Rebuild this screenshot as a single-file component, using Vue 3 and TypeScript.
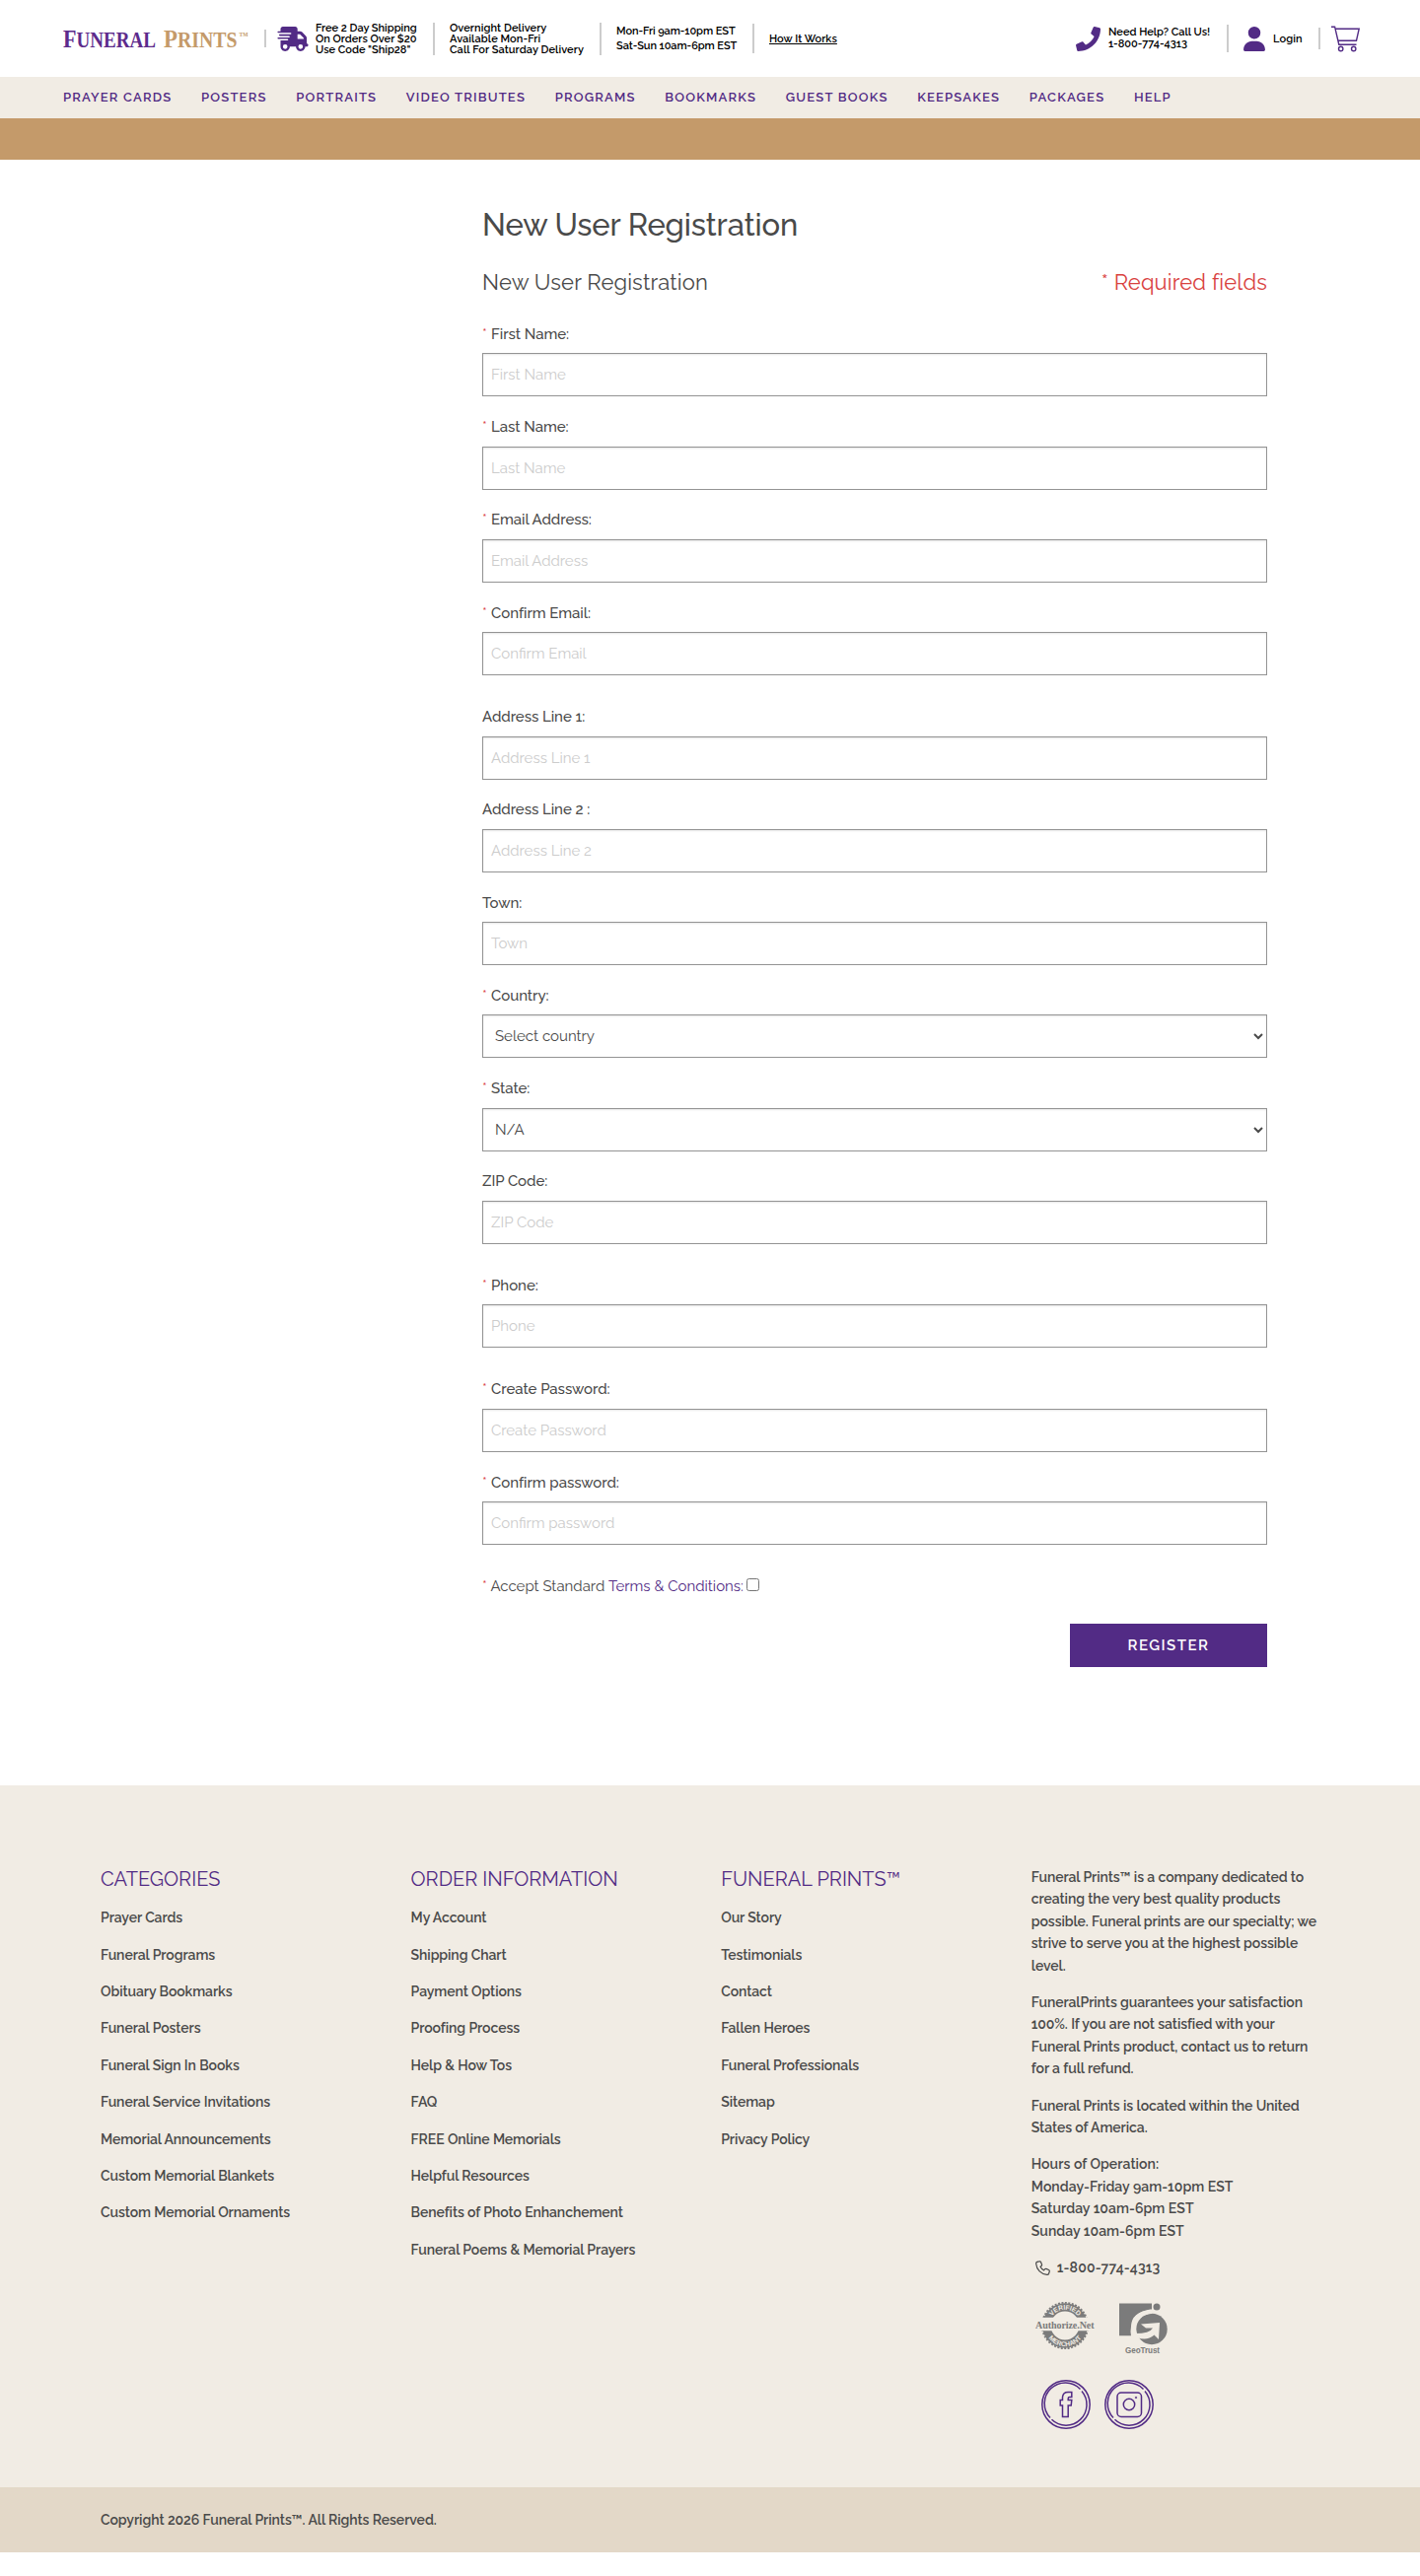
<script setup lang="ts">
interface Field {
  label: string
  required?: boolean
  kind?: 'select'
  text: string
  spaced?: boolean
}

const nav: string[] = [
  'Prayer Cards', 'Posters', 'Portraits', 'Video Tributes', 'Programs',
  'Bookmarks', 'Guest Books', 'Keepsakes', 'Packages', 'Help',
]

const fields: Field[] = [
  { label: 'First Name:', required: true, text: 'First Name' },
  { label: 'Last Name:', required: true, text: 'Last Name' },
  { label: 'Email Address:', required: true, text: 'Email Address' },
  { label: 'Confirm Email:', required: true, text: 'Confirm Email', spaced: true },
  { label: 'Address Line 1:', text: 'Address Line 1' },
  { label: 'Address Line 2 :', text: 'Address Line 2' },
  { label: 'Town:', text: 'Town' },
  { label: 'Country:', required: true, kind: 'select', text: 'Select country' },
  { label: 'State:', required: true, kind: 'select', text: 'N/A' },
  { label: 'ZIP Code:', text: 'ZIP Code', spaced: true },
  { label: 'Phone:', required: true, text: 'Phone', spaced: true },
  { label: 'Create Password:', required: true, text: 'Create Password' },
  { label: 'Confirm password:', required: true, text: 'Confirm password', spaced: true },
]

const columns: { title: string; links: string[] }[] = [
  {
    title: 'CATEGORIES',
    links: ['Prayer Cards', 'Funeral Programs', 'Obituary Bookmarks', 'Funeral Posters', 'Funeral Sign In Books',
      'Funeral Service Invitations', 'Memorial Announcements', 'Custom Memorial Blankets', 'Custom Memorial Ornaments'],
  },
  {
    title: 'ORDER INFORMATION',
    links: ['My Account', 'Shipping Chart', 'Payment Options', 'Proofing Process', 'Help & How Tos', 'FAQ',
      'FREE Online Memorials', 'Helpful Resources', 'Benefits of Photo Enhanchement', 'Funeral Poems & Memorial Prayers'],
  },
  {
    title: 'FUNERAL PRINTS™',
    links: ['Our Story', 'Testimonials', 'Contact', 'Fallen Heroes', 'Funeral Professionals', 'Sitemap', 'Privacy Policy'],
  },
]
</script>

<template>
  <div class="page">
    <header class="top">
      <svg class="logo" width="190" height="26" viewBox="0 0 190 26">
        <g font-family="'Liberation Serif', serif" font-weight="700">
          <text x="0" y="21.500" font-size="22.500" fill="#5d2b8c" textLength="94" lengthAdjust="spacingAndGlyphs"><tspan font-size="26">F</tspan>UNERAL</text>
          <text x="102" y="21.500" font-size="22.500" fill="#c49a6a" textLength="74.500" lengthAdjust="spacingAndGlyphs"><tspan font-size="26">P</tspan>RINTS</text>
          <text x="178.500" y="11" font-size="6.500" fill="#c49a6a" textLength="9" lengthAdjust="spacingAndGlyphs">TM</text>
        </g>
      </svg>
      <i class="sep s1"></i>
      <svg class="truck" viewBox="0 0 640 512" fill="#522b85"><path d="M112 0C85.5 0 64 21.5 64 48V96H16c-8.8 0-16 7.2-16 16s7.2 16 16 16H272c8.8 0 16 7.2 16 16s-7.2 16-16 16H48c-8.8 0-16 7.2-16 16s7.2 16 16 16H240c8.8 0 16 7.2 16 16s-7.2 16-16 16H16c-8.8 0-16 7.2-16 16s7.2 16 16 16H208c8.8 0 16 7.2 16 16s-7.2 16-16 16H64V416c0 53 43 96 96 96s96-43 96-96H384c0 53 43 96 96 96s96-43 96-96h32c17.7 0 32-14.3 32-32s-14.3-32-32-32V237.3c0-17-6.7-33.3-18.7-45.3L512 114.7c-12-12-28.3-18.7-45.3-18.7H416V48c0-26.500-21.500-48-48-48H112zM544 237.300V256H416V160h50.700L544 237.300zM160 368a48 48 0 1 1 0 96 48 48 0 1 1 0-96zm272 48a48 48 0 1 1 96 0 48 48 0 1 1-96 0z" /></svg>
      <div class="info i1">Free 2 Day Shipping<br />On Orders Over $20<br />Use Code "Ship28"</div>
      <i class="sep s2"></i>
      <div class="info i2">Overnight Delivery<br />Available Mon-Fri<br />Call For Saturday Delivery</div>
      <i class="sep s2"></i>
      <div class="info i3">Mon-Fri 9am-10pm EST<br />Sat-Sun 10am-6pm EST</div>
      <i class="sep s3"></i>
      <a class="info how">How It Works</a>
      <div class="account">
        <svg width="25" height="25" viewBox="0 0 512 512" fill="#522b85"><path d="M493.400 24.600l-104-24c-11.300-2.600-22.900 3.300-27.500 13.900l-48 112c-4.200 9.800-1.400 21.300 6.900 28l60.600 49.600c-36 76.700-98.900 140.500-177.200 177.200l-49.600-60.600c-6.800-8.300-18.200-11.100-28-6.900l-112 48C3.900 366.500-2 378.100.6 389.400l24 104C27.100 504.200 36.700 512 48 512c256.100 0 464-207.500 464-464 0-11.200-7.700-20.900-18.600-23.400z" /></svg>
        <div class="info help">Need Help? Call Us!<br />1-800-774-4313</div>
        <i class="sep s4"></i>
        <svg width="22" height="25" viewBox="0 0 448 512" fill="#522b85"><path d="M224 256A128 128 0 1 0 224 0a128 128 0 1 0 0 256zM178.300 304C79.800 304 0 383.800 0 482.300 0 498.700 13.300 512 29.700 512H418.300c16.400 0 29.700-13.300 29.700-29.700C448 383.800 368.200 304 269.700 304z" /></svg>
        <a class="info login">Login</a>
        <i class="sep s5"></i>
        <svg class="cart" width="29" height="27" viewBox="0 0 29 27" fill="none" stroke="#522b85" stroke-width="1.400">
          <path d="M0 1.200H3.600L7.800 19.200H25.500M4.300 3.200H28.200L25.500 15.200H6.900" />
          <circle cx="9.700" cy="23.500" r="2.200" /><circle cx="22.700" cy="23.500" r="2.200" />
        </svg>
      </div>
    </header>

    <nav class="menu"><a v-for="n in nav" :key="n">{{ n.toUpperCase() }}</a></nav>
    <div class="band"></div>

    <main class="main">
      <h1>New User Registration</h1>
      <div class="subhead"><h2>New User Registration</h2><span>* Required fields</span></div>
      <div v-for="f in fields" :key="f.label" class="field" :class="{ spaced: f.spaced }">
        <label><b v-if="f.required">* </b>{{ f.label }}</label>
        <select v-if="f.kind === 'select'" class="control"><option>{{ f.text }}</option></select>
        <input v-else class="control" type="text" :placeholder="f.text" />
      </div>
      <div class="terms"><b>*</b> Accept Standard <a>Terms &amp; Conditions:</a><input type="checkbox" /></div>
      <button class="register">REGISTER</button>
    </main>

    <footer class="foot">
      <section v-for="c in columns" :key="c.title" class="col">
        <h3>{{ c.title }}</h3>
        <a v-for="l in c.links" :key="l">{{ l }}</a>
      </section>
      <section class="col about">
        <p>Funeral Prints™ is a company dedicated to<br />creating the very best quality products<br />possible. Funeral prints are our specialty; we<br />strive to serve you at the highest possible<br />level.</p>
        <p>FuneralPrints guarantees your satisfaction<br />100%. If you are not satisfied with your<br />Funeral Prints product, contact us to return<br />for a full refund.</p>
        <p>Funeral Prints is located within the United<br />States of America.</p>
        <p class="hours">Hours of Operation:<br />Monday-Friday 9am-10pm EST<br />Saturday 10am-6pm EST<br />Sunday 10am-6pm EST</p>
        <p class="phone">
          <svg width="15" height="15" viewBox="0 0 16 16" fill="none" stroke="#4a4a4a" stroke-width="1.300"><path d="M4.200 .9L1.900 1.500C1 1.800.6 2.600.7 3.500 1.300 9.900 6.100 14.700 12.500 15.300c.9.100 1.700-.3 2-1.200l.7-2.300c.2-.8-.1-1.400-.8-1.700l-2.700-1.100c-.6-.3-1.200-.1-1.600.4l-.9 1.100C7.300 9.600 6.100 8.300 5.400 6.700l1.100-.9c.5-.4.6-1 .4-1.600L5.900 1.700C5.600 1 4.900.7 4.200.9z" /></svg>1-800-774-4313
        </p>
        <div class="badges">
          <svg width="60" height="50" viewBox="0 0 60 50">
            <defs>
              <clipPath id="sealHalves"><path d="M0 0H60V15.800H0zM0 29.200H60V50H0z" /></clipPath>
              <path id="arcTop" d="M13.800 24A16.200 16.200 0 0 1 46.200 24" />
              <path id="arcBottom" d="M9 24A21 21 0 0 0 51 24" />
            </defs>
            <g fill="none" stroke="#7b7b7b" clip-path="url(#sealHalves)">
              <circle cx="30" cy="24" r="18.600" stroke-width="8.400" />
              <circle cx="30" cy="24" r="23.200" stroke-width="1.800" stroke-dasharray="2 1.500" />
            </g>
            <g font-family="'Liberation Sans', sans-serif" font-weight="700" font-size="6.800" fill="#f1ece4" text-anchor="middle">
              <text><textPath href="#arcTop" startOffset="50%">VERIFIED</textPath></text>
              <text><textPath href="#arcBottom" startOffset="50%">MERCHANT</textPath></text>
            </g>
            <text x="0" y="26.500" font-family="'Liberation Serif', serif" font-weight="700" font-size="10.500" fill="#7b7b7b" textLength="59.500" lengthAdjust="spacingAndGlyphs">Authorize.Net</text>
          </svg>
          <svg width="50" height="56" viewBox="0 0 50 56">
            <path d="M0 1.500H33V8Q12 10 12 25Q11 30 12 34.300H0z" fill="#7b7b7b" />
            <circle cx="38" cy="5" r="3.500" fill="#7b7b7b" />
            <circle cx="33" cy="27.500" r="15.700" fill="#7b7b7b" />
            <path d="M18 36Q28 40 35.500 33.500L40 38 41 21 22 22.500 27 26.500H34Q31 32 16 32z" fill="#f1ece4" />
            <path d="M33 9.500Q14.500 12 14.500 27Q14.500 32 18 36" fill="none" stroke="#f1ece4" stroke-width="4.500" />
            <text x="6" y="51.500" font-family="'Liberation Sans', sans-serif" font-size="8.500" fill="#7b7b7b" textLength="35" lengthAdjust="spacingAndGlyphs">GeoTrust</text>
          </svg>
        </div>
        <div class="social">
          <svg v-for="s in ['f', 'i']" :key="s" width="50" height="50" viewBox="0 0 50 50" fill="none" stroke="#522b85" stroke-width="1.500">
            <circle cx="25" cy="25" r="24.200" />
            <path d="M39.500 9.500A21 21 0 0 0 9 38.500M10.500 40.300A21 21 0 0 0 41 11.500" />
            <path v-if="s === 'f'" d="M21.500 37.500V26H19.200V20.500H21.500V17.500Q22 12.500 27 12.500H30.800V17.500H28.600Q27.200 17.500 27.200 19V20.500H30.800L30.200 26H27.200V37.500z" />
            <template v-else>
              <rect x="13" y="13" width="24.500" height="24.500" rx="4" /><circle cx="25" cy="25" r="5.700" />
              <circle cx="32" cy="18" r=".8" fill="#522b85" stroke-width=".6" />
            </template>
          </svg>
        </div>
      </section>
    </footer>
    <div class="copy">Copyright 2026 Funeral Prints™. All Rights Reserved.</div>
  </div>
</template>

<style>
body { margin: 0; background: #fff; }
</style>

<style scoped>
.page { width: 1440px; height: 2613px; overflow: hidden; font-family: Raleway, Lato, sans-serif; color: #4a4a4a; background: #fff; }
.page * { box-sizing: border-box; }
.top { height: 78px; padding: 0 61px 0 64px; display: flex; align-items: center; }
.logo { flex: none; overflow: visible; }
.sep { flex: none; width: 2px; background: #ccc; }
.s1 { height: 18px; margin-left: 14px; }
.s2 { height: 33px; }
.s3 { height: 30px; }
.s4 { height: 28px; margin-right: 15px; }
.s5 { height: 22px; margin-right: 11px; }
.truck { flex: none; width: 32px; height: 25px; margin-left: 11px; }
.info { color: #000; font-size: 11px; line-height: 11px; font-weight: 600; white-space: nowrap; letter-spacing: .050px; }
.i1 { margin-left: 7px; width: 119px; letter-spacing: 0; }
.i2 { margin-left: 15px; width: 152px; letter-spacing: .080px; }
.i3 { margin-left: 15px; width: 138px; line-height: 15px; letter-spacing: -.080px; }
.how { margin-left: 15px; text-decoration: underline; }
.account { margin-left: auto; display: flex; align-items: center; }
.help { margin-left: 8px; width: 120px; line-height: 12px; letter-spacing: 0; }
.login { margin-left: 8px; width: 46px; letter-spacing: .100px; }
.menu { height: 42px; background: #f1ece4; display: flex; gap: 29.600px; padding: 0 0 1px 64px; align-items: center; font-size: 13px; font-weight: 600; letter-spacing: 1.200px; color: #522b85; white-space: nowrap; }
.band { height: 42px; background: #c49a6a; }
.main { width: 796px; margin-left: 489px; height: 1649px; padding-top: 46px; }
h1 { margin: 0; font-size: 31px; line-height: 40px; font-weight: 500; white-space: nowrap; letter-spacing: -.120px; }
.subhead { height: 76px; padding-top: 21px; display: flex; justify-content: space-between; font-size: 22px; line-height: 34px; letter-spacing: .140px; }
.subhead span { color: #d9423f; }
h2 { margin: 0; font-size: 22px; font-weight: 400; }
.field { height: 94.250px; padding-top: 4.900px; }
.field.spaced { height: 105.500px; }
label { display: block; font-size: 15px; line-height: 20px; height: 29.500px; font-weight: 500; letter-spacing: -.050px; }
b { color: #d9423f; font-weight: 400; letter-spacing: .200px; }
.control { display: block; width: 100%; height: 44px; border: 1px solid #949494; border-radius: 0; padding: 0 8px; background: #fff; box-shadow: inset 0 1px 2px rgba(10, 10, 10, .1); font-family: inherit; font-size: 15px; color: #4a4a4a; }
.control::placeholder { color: #ccc; opacity: 1; }
.terms { display: flex; align-items: center; height: 24px; margin-top: 3px; font-size: 15px; white-space: pre; }
.terms a { color: #522b85; }
.terms input { margin: 0 0 4px 3px; width: 13px; height: 13px; }
.register { display: block; width: 200px; height: 44px; margin: 26px 0 0 auto; border: 0; background: #522b85; color: #fff; font-family: inherit; font-size: 15px; font-weight: 600; letter-spacing: 1.500px; }
.foot { height: 712px; padding: 82px 0 0 102px; background: #f1ece4; display: flex; font-size: 14px; font-weight: 600; letter-spacing: -.080px; }
.col { width: 314.600px; flex: none; }
h3 { margin: -1px 0 10px; font-size: 20px; line-height: 28px; font-weight: 400; color: #522b85; letter-spacing: 0; }
.col > a { display: block; line-height: 22.400px; height: 37.400px; padding-top: 4.300px; }
.about p { margin: 0 0 15px; line-height: 22.400px; white-space: nowrap; }
.about .hours { letter-spacing: .050px; }
.phone { display: flex; align-items: center; gap: 7px; padding-left: 4px; letter-spacing: .200px; }
.badges { display: flex; gap: 25px; padding-left: 4px; height: 79px; margin-top: 23px; }
.badges svg { overflow: visible; }
.social { display: flex; gap: 14px; padding-left: 10px; }
.copy { height: 66px; background: #e3d8c8; padding-left: 102px; line-height: 66px; font-size: 14px; font-weight: 600; letter-spacing: -.060px; }
</style>
